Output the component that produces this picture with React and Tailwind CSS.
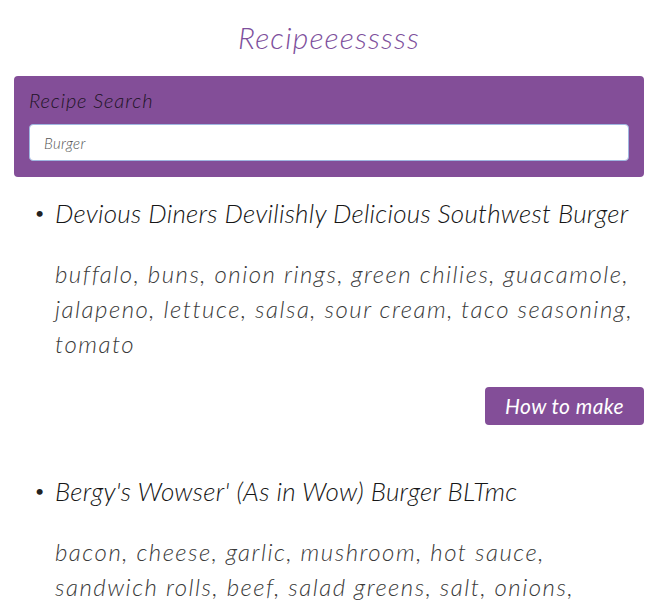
const recipes = [
  {
    title: "Devious Diners Devilishly Delicious Southwest Burger",
    ingredients:
      "buffalo, buns, onion rings, green chilies, guacamole, jalapeno, lettuce, salsa, sour cream, taco seasoning, tomato",
  },
  {
    title: "Bergy's Wowser' (As in Wow) Burger BLTmc",
    ingredients:
      "bacon, cheese, garlic, mushroom, hot sauce, sandwich rolls, beef, salad greens, salt, onions, tomato",
  },
];

function Recipe({ title, ingredients }) {
  return (
    <li className="mt-5 mb-[50px]">
      <div className="flex items-center">
        <span className="w-[41px] pl-[21px] text-[#222] text-[16px] leading-[32px]">•</span>
        <h2 className="flex-1 text-[26px] leading-[32px] text-[#161616] italic font-light tracking-[0.25px]">{title}</h2>
      </div>
      <p className="ml-[41px] mt-[27px] text-[24px] leading-[35px] text-[#3a3a3a] italic font-light tracking-[1.5px]">
        {ingredients}
      </p>
      <div className="flex justify-end mt-[26px]">
        <button className="h-[38px] w-[159px] rounded-[4px] bg-[#834e98] text-white text-[21px] italic font-normal tracking-[0.4px]">
          How to make
        </button>
      </div>
    </li>
  );
}

export default function App() {
  return (
    <div className="min-h-screen bg-white px-[14px] font-['Lato',sans-serif] overflow-hidden">
      <h1 className="pt-[20px] text-center text-[30px] leading-[34px] text-[#7d4f9c] italic font-light tracking-[1.2px]">
        Recipeeesssss
      </h1>
      <div className="mt-[22px] rounded-[4px] bg-[#834e98] px-[15px] pt-[10px] pb-[16px]">
        <label className="block text-[20px] leading-[28px] text-[#1e1426] italic font-light tracking-[0.9px]">
          Recipe Search
        </label>
        <input
          defaultValue="Burger"
          className="mt-[10px] block h-[37px] w-full rounded-[4px] border border-[#9fb6e0] bg-white px-[14px] text-[15px] text-[#555] italic font-light tracking-[0.3px] outline-none"
        />
      </div>
      <ul>
        {recipes.map((r) => (
          <Recipe key={r.title} {...r} />
        ))}
      </ul>
    </div>
  );
}
